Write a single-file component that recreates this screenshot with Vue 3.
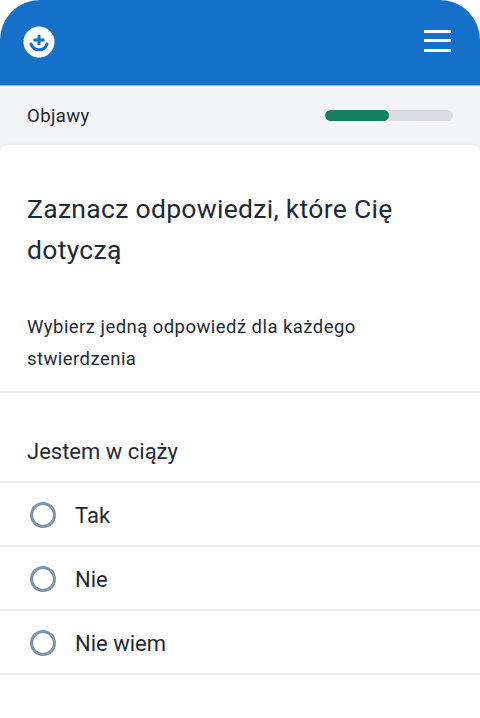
<script setup>
const options = ['Tak', 'Nie', 'Nie wiem']
</script>

<template>
  <div class="page">
    <header class="topbar">
      <svg class="logo" width="32" height="32" viewBox="0 0 32 32">
        <circle cx="16" cy="16" r="15.500" fill="#fff" />
        <path d="M16 9v10M10.500 14h11" stroke="#1470c8" stroke-width="3" fill="none" />
        <path d="M8 18c1.200 3.800 4.200 5.800 8 5.800s6.800-2 8-5.800" stroke="#1470c8" stroke-width="3" fill="none" stroke-linecap="round" />
      </svg>
      <button class="menu" aria-label="Menu"><span></span><span></span><span></span></button>
    </header>
    <div class="content">
      <div class="status">
        <span class="status-label">Objawy</span>
        <div class="progress"><div class="progress-fill" :style="{ width: '50%' }"></div></div>
      </div>
      <main class="card">
        <h1 class="title">Zaznacz odpowiedzi, które Cię dotyczą</h1>
        <p class="hint">Wybierz jedną odpowiedź dla każdego stwierdzenia</p>
        <h2 class="question">Jestem w ciąży</h2>
        <label v-for="o in options" :key="o" class="option">
          <span class="radio"></span>
          <span class="option-text">{{ o }}</span>
        </label>
      </main>
    </div>
  </div>
</template>

<style scoped>
.page {
  width: 480px;
  height: 718px;
  background: #fff;
  overflow: hidden;
  display: flex;
  flex-direction: column;
  font-family: Roboto, sans-serif;
  color: #1f2933;
}
.topbar {
  height: 85px;
  flex: none;
  box-sizing: border-box;
  background: #1470c8;
  border-radius: 40px 40px 0 0;
  padding: 0 29px 4px 23px;
  display: flex;
  align-items: center;
  justify-content: space-between;
}
.logo { display: block; margin-top: 2px; }
.menu {
  width: 27px;
  height: 22px;
  padding: 0;
  border: 0;
  background: none;
  display: flex;
  flex-direction: column;
  justify-content: space-between;
}
.menu span { display: block; height: 3px; background: #fff; }
.content {
  flex: 1;
  display: flex;
  flex-direction: column;
  background: #f3f4f6;
}
.status {
  height: 60px;
  flex: none;
  box-sizing: border-box;
  border-top: 1px solid #8fbbe6;
  padding: 0 27px;
  display: flex;
  align-items: center;
  justify-content: space-between;
}
.status-label { font-size: 18.500px; letter-spacing: 0.4px; }
.progress {
  width: 128px;
  height: 11px;
  border-radius: 6px;
  background: #d8dee4;
  overflow: hidden;
}
.progress-fill { height: 100%; background: #14805e; border-radius: 6px; }
.card {
  flex: 1;
  background: #fff;
  border-radius: 8px 8px 0 0;
  box-shadow: 0 0 3px rgba(31, 41, 51, 0.06);
}
.title {
  margin: 0;
  padding: 43px 27px 0;
  font-size: 26.500px;
  font-weight: 400;
  line-height: 41px;
  letter-spacing: 0.3px;
}
.hint {
  margin: 0;
  padding: 41px 27px 16px;
  font-size: 18.500px;
  line-height: 32px;
  letter-spacing: 0.45px;
  border-bottom: 2px solid #e9ecef;
}
.question {
  margin: 0;
  padding: 43px 27px 13px;
  font-size: 22px;
  font-weight: 400;
  line-height: 32px;
  border-bottom: 2px solid #e9ecef;
}
.option {
  height: 64px;
  box-sizing: border-box;
  border-bottom: 2px solid #e9ecef;
  padding: 2px 0 0 30px;
  display: flex;
  align-items: center;
  gap: 19px;
}
.radio {
  width: 26px;
  height: 26px;
  box-sizing: border-box;
  border: 3px solid #7f93a8;
  border-radius: 50%;
}
.option-text { font-size: 22px; }
</style>
